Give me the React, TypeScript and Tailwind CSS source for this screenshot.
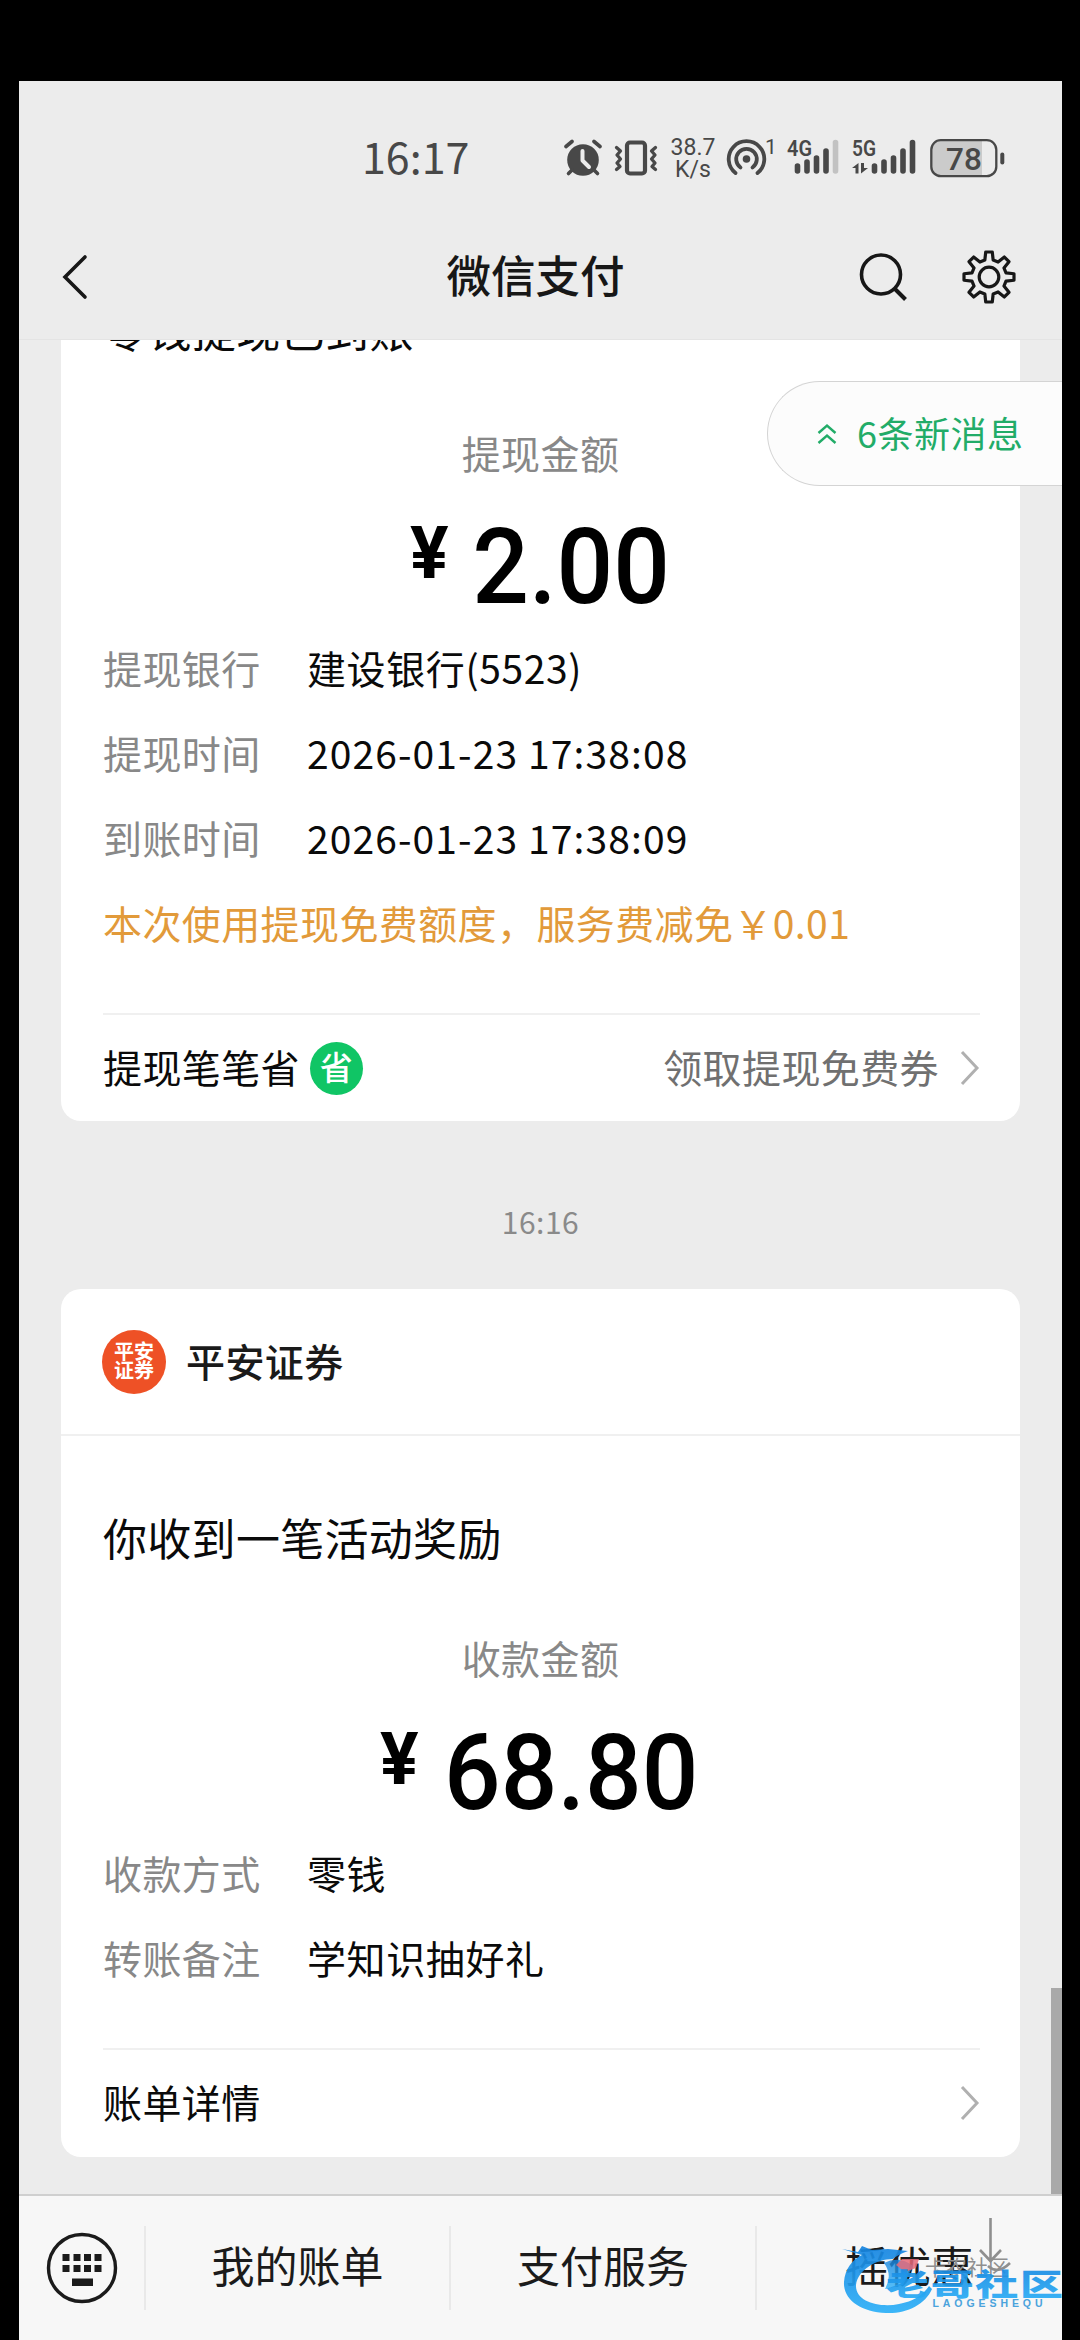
import React from "react";

const INK = "#484848";

function AlarmIcon() {
  return (
    <svg className="block h-[38px] w-[38px]" viewBox="0 0 38 38" fill="none" strokeLinecap="round">
      <circle cx="19" cy="21" r="15.8" fill={INK} />
      <path d="M2 7.5 8 2.5M36 7.5 30 2.5" stroke={INK} strokeWidth="3.6" />
      <path d="M8 31 4.500 34.500M30 31 33.500 34.500" stroke={INK} strokeWidth="3.6" />
      <path d="M18.500 12V21.500L25 28" stroke="#ececec" strokeWidth="4" strokeLinejoin="round" />
    </svg>
  );
}

function VibrateIcon() {
  return (
    <svg className="block h-[38px] w-[44px]" viewBox="0 0 44 38" fill="none" stroke={INK} strokeLinecap="round" strokeLinejoin="round">
      <rect x="13" y="3.500" width="18" height="31" rx="3" strokeWidth="4.200" />
      <path d="M2.500 8.500 6.500 12 3 16 6.500 20 3 24 6 27.500 2.500 30.500" strokeWidth="3.300" />
      <path d="M41.500 8.500 37.500 12 41 16 37.500 20 41 24 38 27.500 41.500 30.500" strokeWidth="3.300" />
    </svg>
  );
}

function HotspotIcon() {
  return (
    <svg className="block h-[40px] w-[50px] overflow-visible" viewBox="0 0 50 40" fill="none" stroke={INK} strokeLinecap="round">
      <path d="M9.500 35A17.800 17.800 0 1 1 31.500 35" strokeWidth="3.800" />
      <path d="M14.500 29.500A10.300 10.300 0 1 1 26.500 29.500" strokeWidth="3.800" />
      <circle cx="20.500" cy="21" r="3.800" fill={INK} stroke="none" />
      <text x="39" y="15.500" fontSize="21" fontFamily="Roboto" fill={INK} stroke="none">1</text>
    </svg>
  );
}

function Signal4G() {
  return (
    <svg className="block h-[40px] w-[53px] overflow-visible" viewBox="0 0 53 40" stroke={INK} strokeWidth="5.600" strokeLinecap="round">
      <text x="0" y="18" fontSize="22" fontWeight="600" fontFamily="Roboto" fill={INK} stroke="none" textLength="25" lengthAdjust="spacingAndGlyphs">4G</text>
      <path d="M10.500 28V33M20 24V33M29.500 20V33M39 13V33" />
      <path d="M48.500 4.500V33" stroke="#c2c2c2" />
    </svg>
  );
}

function Signal5G() {
  return (
    <svg className="block h-[40px] w-[65px] overflow-visible" viewBox="0 0 65 40" stroke={INK} strokeWidth="5.600" strokeLinecap="round">
      <text x="0" y="18" fontSize="22" fontWeight="600" fontFamily="Roboto" fill={INK} stroke="none" textLength="24" lengthAdjust="spacingAndGlyphs">5G</text>
      <path d="M0 30 6.500 25V35.500H3.500V30ZM9 25H12V30H16L9 35.500Z" fill={INK} stroke="none" />
      <path d="M22.500 28V33M32 24V33M41.500 20V33M51 13V33M60.500 4.500V33" />
    </svg>
  );
}

function Battery() {
  return (
    <svg className="block h-[40px] w-[76px]" viewBox="0 0 76 40">
      <path d="M11 3H52V38H11A9 9 0 0 1 2 29V12A9 9 0 0 1 11 3Z" fill="#cbcbcb" />
      <rect x="1.300" y="2.200" width="65" height="36" rx="9.500" fill="none" stroke={INK} strokeWidth="2.300" />
      <path d="M72.300 16.500V24.500" stroke={INK} strokeWidth="4" strokeLinecap="round" />
      <text x="34" y="31.500" fontSize="31.500" fontWeight="500" fontFamily="Roboto" textAnchor="middle" fill={INK}>78</text>
    </svg>
  );
}

function gearPath() {
  const pts: string[] = [];
  for (let i = 0; i < 8; i++) {
    const base = (i * Math.PI) / 4 - Math.PI / 2;
    const at = (r: number, o: number) =>
      `${(28 + r * Math.cos(base + o)).toFixed(2)} ${(28 + r * Math.sin(base + o)).toFixed(2)}`;
    pts.push(at(17.5, -0.24), at(25.2, -0.13), at(25.2, 0.13), at(17.5, 0.24));
  }
  return "M" + pts.join("L") + "Z";
}

function Chevron({ className }: { className: string }) {
  return (
    <svg className={className} viewBox="0 0 20 36" fill="none" stroke="#b0b0b0" strokeWidth="3">
      <path d="M2 2 17 18 2 34" />
    </svg>
  );
}

function Row({ label, value, wide }: { label: string; value: string; wide?: boolean }) {
  return (
    <div className="flex h-[85px] text-[39px] leading-[83px]">
      <span className="w-[204px] tracking-[0.400px] text-[#888888]">{label}</span>
      <span className={wide ? "tracking-[1.100px] text-[#0a0a0a]" : "tracking-[0.600px] text-[#0a0a0a]"}>{value}</span>
    </div>
  );
}

function Amount({ value }: { value: string }) {
  return (
    <div className="flex h-[106px] items-start justify-center pl-[5px] font-[Roboto] font-medium text-black">
      <span className="mt-[7px] mr-[17px] text-[72px] font-bold leading-[72px]">¥</span>
      <span className="mt-[3px] inline-block scale-x-[0.94] text-[106px] leading-[106px]">{value}</span>
    </div>
  );
}

function StatusBar() {
  return (
    <div className="flex h-[154px] items-center text-[#484848]">
      <span className="-mt-[6px] ml-[343px] w-[202px] text-[43px] leading-[60px]">16:17</span>
      <AlarmIcon />
      <div className="ml-[12px]"><VibrateIcon /></div>
      <div className="mt-[2px] ml-[12px] flex w-[46px] flex-col items-center font-[Roboto] text-[23px] leading-[22px]">
        <span>38.7</span>
        <span>K/s</span>
      </div>
      <div className="ml-[10px]"><HotspotIcon /></div>
      <div className="ml-[11px]"><Signal4G /></div>
      <div className="ml-[12px]"><Signal5G /></div>
      <div className="ml-[13px]"><Battery /></div>
    </div>
  );
}

function NavBar() {
  return (
    <div className="grid h-[84px] grid-cols-[1fr_auto_1fr] items-center">
      <svg className="ml-[42px] h-[46px] w-[28px]" viewBox="0 0 28 46" fill="none" stroke="#171717" strokeWidth="3.600" strokeLinecap="round">
        <path d="M24 3 4 23 24 43" />
      </svg>
      <span className="-mt-[6px] pr-[10px] text-[44.500px] font-medium leading-[78px] text-[#171717]">微信支付</span>
      <div className="flex items-center justify-end pr-[45px]">
        <svg className="h-[56px] w-[56px]" viewBox="0 0 56 56" fill="none" stroke="#171717">
          <circle cx="27" cy="25.500" r="19.500" strokeWidth="3.600" />
          <path d="M41 40 51.500 50.500" strokeWidth="4" />
        </svg>
        <svg className="ml-[51px] h-[56px] w-[56px]" viewBox="0 0 56 56" fill="none" stroke="#171717" strokeWidth="3.200" strokeLinejoin="round">
          <path d={gearPath()} />
          <circle cx="28" cy="28" r="9.800" />
        </svg>
      </div>
    </div>
  );
}

function KeyboardIcon() {
  return (
    <svg className="h-[74px] w-[74px]" viewBox="0 0 74 74">
      <circle cx="37" cy="37" r="33.500" fill="none" stroke="#1b1b1b" strokeWidth="3.400" />
      <g fill="#1b1b1b">
        {[17.5, 28.5, 39, 49.5].map((x) => (
          <React.Fragment key={x}>
            <rect x={x} y="23" width="7" height="7" />
            <rect x={x} y="34" width="7" height="7" />
          </React.Fragment>
        ))}
        <rect x="27" y="47.500" width="21" height="7.500" />
      </g>
    </svg>
  );
}

function CommunityMark() {
  return (
    <svg className="absolute top-[10px] right-0 h-[110px] w-[222px] overflow-visible" viewBox="840 2205 222 110">
      <defs>
        <linearGradient id="blue" x1="0" y1="0" x2="0" y2="1">
          <stop offset="0" stopColor="#1684e0" />
          <stop offset="1" stopColor="#2bb0f8" />
        </linearGradient>
      </defs>
      <g fill="none" stroke="#8f8f8f" strokeWidth="2.600">
        <path d="M990.500 2217V2259M980 2249 990.500 2260 1001 2249" />
        <path d="M988 2265Q998 2274 1010 2262" />
      </g>
      <text x="925" y="2274" fontSize="21" fill="#8f8f8f" fontFamily="Noto Sans CJK SC">卡农社区</text>
      <path
        d="M842 2248 858 2251 862 2245 872 2249 888 2248 908 2250Q897 2254 893 2258C876 2258 858 2269 856 2284C855 2301 880 2307 899 2303Q920 2299 929 2285L932 2288C925 2304 906 2313 886 2312C860 2311 843 2298 844 2281C845 2268 852 2259 862 2254Z"
        fill="url(#blue)"
        opacity="0.920"
      />
      <path d="M884 2262Q899 2254 913 2265L903 2284 885 2288Q893 2274 884 2262Z" fill="url(#blue)" opacity="0.800" />
      <path d="M896 2264 902 2258 919 2258 916 2267 905 2271Z" fill="#e66a78" opacity="0.850" />
      <g fontFamily="Noto Sans CJK SC" fontWeight="900" fill="url(#blue)" opacity="0.920">
        <text transform="translate(886 2294) scale(1 0.700)" fontSize="43" textLength="177">老哥社区</text>
      </g>
      <text x="932.500" y="2306" fontSize="10.500" textLength="110" fontFamily="Liberation Sans" fontWeight="700" fill="#4ba3dc">LAOGESHEQU</text>
    </svg>
  );
}

export default function App() {
  return (
    <div className="flex h-[2340px] w-[1080px] flex-col overflow-hidden bg-black pt-[81px] pr-[18px] pl-[19px] font-['Noto_Sans_CJK_SC',sans-serif]">
      <div className="relative flex h-[2259px] w-[1043px] flex-col bg-[#ececec]">
        <header className="h-[259px] shrink-0 border-b border-[#e4e4e4]">
          <StatusBar />
          <NavBar />
        </header>

        <main className="h-[1854px] shrink-0 overflow-hidden pl-[42px]">
          <section className="-mt-[40px] h-[821px] w-[959px] rounded-b-[20px] bg-white px-[42px]">
            <div className="h-[63px] text-[44px] leading-[59px] tracking-[0.400px] text-[#0a0a0a]">零钱提现已到账</div>
            <div className="mt-[61px] h-[60px] text-center text-[39px] leading-[56px] tracking-[0.400px] text-[#888888]">提现金额</div>
            <div className="mt-[27px]"><Amount value="2.00" /></div>
            <div className="mt-[9px]">
              <Row label="提现银行" value="建设银行(5523)" />
              <Row label="提现时间" value="2026-01-23 17:38:08" wide />
              <Row label="到账时间" value="2026-01-23 17:38:09" wide />
              <div className="h-[85px] whitespace-nowrap text-[39px] leading-[83px] tracking-[0.400px] text-[#e29a3a]">本次使用提现免费额度，服务费减免￥0.01</div>
            </div>
            <div className="mt-[47px] h-[2px] w-[877px] bg-[#f0f0f0]" />
            <div className="flex h-[106px] w-[877px] items-center text-[39px] leading-[100px] tracking-[0.400px]">
              <span className="-mt-[4px] text-[#0a0a0a]">提现笔笔省</span>
              <span className="ml-[10px] flex size-[53px] items-center justify-center rounded-full bg-[#10c565] text-[33px] leading-[48px] font-medium text-white">
                <span className="-mt-[5px]">省</span>
              </span>
              <span className="-mt-[4px] ml-auto text-[#707070]">领取提现免费券</span>
              <Chevron className="ml-[21px] h-[36px] w-[20px]" />
            </div>
          </section>

          <div className="h-[168px] w-[959px] text-center text-[30px] leading-[201px] tracking-[0.500px] text-[#8a8a8a]">16:16</div>

          <section className="h-[868px] w-[959px] rounded-[20px] bg-white">
            <div className="flex h-[147px] items-center border-b-2 border-[#f0f0f0] px-[41px]">
              <div className="flex size-[64px] flex-col items-center justify-center rounded-full bg-[#ee5126] text-[20px] leading-[19px] font-bold text-white">
                <span className="-mt-[3px]">平安</span>
                <span>证券</span>
              </div>
              <span className="-mt-[3px] ml-[20px] text-[39px] leading-[60px] font-medium tracking-[0.400px] text-[#1a1a1a]">平安证券</span>
            </div>
            <div className="px-[42px]">
              <div className="mt-[71px] h-[64px] text-[44px] leading-[61px] tracking-[0.300px] text-[#0a0a0a]">你收到一笔活动奖励</div>
              <div className="mt-[58px] h-[60px] text-center text-[39px] leading-[56px] tracking-[0.400px] text-[#888888]">收款金额</div>
              <div className="mt-[28px]"><Amount value="68.80" /></div>
              <div className="mt-[8px]">
                <Row label="收款方式" value="零钱" />
                <Row label="转账备注" value="学知识抽好礼" />
              </div>
              <div className="mt-[47px] h-[2px] w-[877px] bg-[#f0f0f0]" />
              <div className="flex h-[106px] w-[877px] items-center justify-between text-[39px] leading-[100px] tracking-[0.400px] text-[#0a0a0a]">
                <span className="-mt-[4px]">账单详情</span>
                <Chevron className="h-[36px] w-[20px]" />
              </div>
            </div>
          </section>
        </main>

        <footer className="relative flex h-[146px] shrink-0 items-center border-t-2 border-[#cfcfcf] bg-[#f7f7f7] text-[43px] leading-[76px] text-[#1b1b1b]">
          <div className="flex w-[125px] justify-center"><KeyboardIcon /></div>
          <div className="flex h-[84px] w-[305px] justify-center border-l-2 border-[#e9e9e9]">我的账单</div>
          <div className="flex h-[84px] w-[306px] justify-center border-l-2 border-[#e9e9e9]">支付服务</div>
          <div className="flex h-[84px] w-[307px] justify-center border-l-2 border-[#e9e9e9]">摇优惠</div>
          <CommunityMark />
        </footer>

        <div className="absolute top-[300px] right-0 flex h-[105px] w-[295px] items-center rounded-l-full border border-r-0 border-[#d4d4d4] bg-[#fcfcfc] text-[36px] leading-[60px] text-[#22ac68]">
          <svg className="ml-[49px] h-[22px] w-[20px]" viewBox="0 0 20 22" fill="none" stroke="#22ac68" strokeWidth="2.400">
            <path d="M1.500 10 10 2.500 18.500 10M1.500 20 10 12.500 18.500 20" />
          </svg>
          <span className="-mt-[4px] ml-[20px] tracking-[0.500px]">6条新消息</span>
        </div>
        <div className="absolute top-[1907px] right-0 h-[206px] w-[11px] bg-[#a9a9a9]" />
      </div>
    </div>
  );
}
